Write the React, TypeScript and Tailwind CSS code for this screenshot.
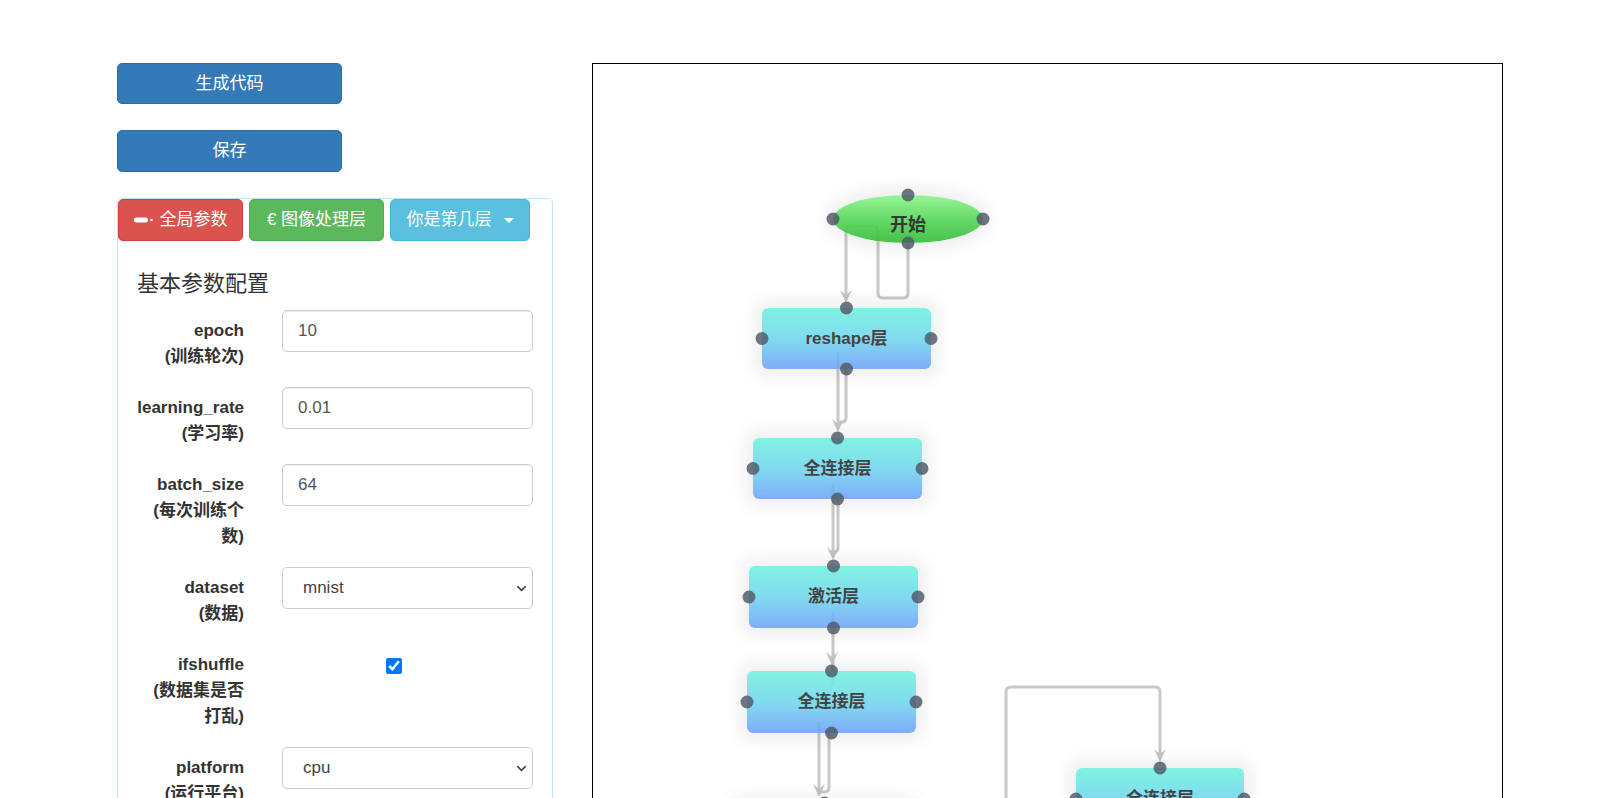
import { ChevronDown } from "lucide-react";

type FlowNode = {
  id: string;
  x: number;
  y: number;
  w: number;
  h: number;
  label: string;
  start?: boolean;
};

// page coordinates; canvas padding box starts at (593, 64)
const OX = 593;
const OY = 64;

const nodes: FlowNode[] = [
  { id: "start", x: 833, y: 195, w: 150, h: 48, label: "开始", start: true },
  { id: "reshape", x: 762, y: 308, w: 169, h: 61, label: "reshape层" },
  { id: "fc1", x: 753, y: 438, w: 169, h: 61, label: "全连接层" },
  { id: "act", x: 749, y: 566, w: 169, h: 62, label: "激活层" },
  { id: "fc2", x: 747, y: 671, w: 169, h: 62, label: "全连接层" },
  { id: "fc3", x: 740, y: 803, w: 169, h: 62, label: "全连接层" },
  { id: "fc4", x: 1076, y: 768, w: 168, h: 62, label: "全连接层" },
];

const links = [
  "M908 244 V293 Q908 298 903 298 H883 Q878 298 878 293 V231 Q878 226 873 226 H851 Q846 226 846 231 V297",
  "M846 369 V418 Q846 422 842 422 H838",
  "M838 352 V428",
  "M838 499 V548 Q838 552 834 552 H833",
  "M833 484 V556",
  "M833 612 V686",
  "M829 733 V787 Q829 792 824 792 H820",
  "M819 722 V794",
  "M1006 800 V692 Q1006 687 1011 687 H1155 Q1160 687 1160 692 V758",
];

const arrows: [number, number][] = [
  [846, 303],
  [838, 432],
  [833, 560],
  [832, 665],
  [819, 797],
  [1160, 762],
];

const arrowPoints = (x: number, y: number) =>
  `${x},${y} ${x - 6},${y - 13} ${x},${y - 8} ${x + 6},${y - 13}`;

const fields = [
  { name: "epoch", desc: "(训练轮次)", kind: "input", value: "10" },
  { name: "learning_rate", desc: "(学习率)", kind: "input", value: "0.01" },
  { name: "batch_size", desc: "(每次训练个数)", kind: "input", value: "64" },
  { name: "dataset", desc: "(数据)", kind: "select", value: "mnist" },
  { name: "ifshuffle", desc: "(数据集是否打乱)", kind: "check", value: "" },
  { name: "platform", desc: "(运行平台)", kind: "select", value: "cpu" },
];

function Canvas() {
  return (
    <div className="relative ml-[39px] h-[760px] w-[911px] shrink-0 border border-black">
      <svg
        className="absolute left-0 top-0"
        width={909}
        height={760}
        viewBox={`${OX} ${OY} 909 760`}
      >
        {links.map((d, i) => (
          <path
            key={i}
            d={d}
            fill="none"
            stroke="#c9c9c9"
            strokeWidth={3}
            strokeLinejoin="round"
          />
        ))}
        {arrows.map(([x, y], i) => (
          <polygon key={i} points={arrowPoints(x, y)} fill="#c4c4c4" />
        ))}
      </svg>

      {nodes.map((n) => (
        <div
          key={n.id}
          className={
            n.start
              ? "absolute flex items-center justify-center rounded-[50%] bg-linear-to-b from-[#8af58b] via-[#57d65a] to-[#30bb35] pt-[12px] text-[18px] font-bold text-[#222] opacity-[0.9] shadow-[0_0_16px_8px_rgba(0,0,0,0.07)]"
              : "absolute flex items-center justify-center rounded-[6px] bg-linear-to-b from-[#70f1de] via-[#70d6ee] to-[#6fa1f7] text-[17px] font-bold text-[#2a2a2a] opacity-[0.88] shadow-[0_0_16px_8px_rgba(0,0,0,0.07)]"
          }
          style={{ left: n.x - OX, top: n.y - OY, width: n.w, height: n.h }}
        >
          {n.label}
        </div>
      ))}

      {/* endpoints sit above the nodes */}
      <svg
        className="pointer-events-none absolute left-0 top-0"
        width={909}
        height={760}
        viewBox={`${OX} ${OY} 909 760`}
      >
        {nodes.map((n) => (
          <g key={n.id} fill="#4f5968" opacity={0.82}>
            <circle cx={n.x + n.w / 2} cy={n.y} r={6.5} />
            <circle cx={n.x + n.w / 2} cy={n.y + n.h} r={6.5} />
            <circle cx={n.x} cy={n.y + n.h / 2} r={6.5} />
            <circle cx={n.x + n.w} cy={n.y + n.h / 2} r={6.5} />
          </g>
        ))}
      </svg>
    </div>
  );
}

export default function App() {
  return (
    <div className="h-[798px] overflow-hidden bg-white font-['Liberation_Sans','Noto_Sans_CJK_SC',sans-serif] text-[#333]">
      <div className="flex pl-[117px] pt-[63px]">
        <div className="w-[436px] shrink-0">
          <button className="block h-[41px] w-[225px] rounded-[5px] border border-[#2e6da4] bg-[#337ab7] text-[17px] text-white">
            生成代码
          </button>
          <button className="mt-[26px] block h-[42px] w-[225px] rounded-[5px] border border-[#2e6da4] bg-[#337ab7] text-[17px] text-white">
            保存
          </button>

          <div className="mt-[26px] h-[700px] rounded-[5px] border border-[#bce8f1]">
            <div className="flex gap-[6px]">
              <button className="flex h-[42px] w-[125px] items-center justify-center gap-[6px] rounded-[5px] border border-[#d43f3a] bg-[#d9534f] text-[17px] text-white">
                <svg width="20" height="6" viewBox="0 0 20 6">
                  <rect x="0" y="0.5" width="14" height="5" rx="2.5" fill="#fff" />
                  <circle cx="17.5" cy="3" r="1.3" fill="#fff" />
                </svg>
                全局参数
              </button>
              <button className="flex h-[42px] w-[135px] items-center justify-center rounded-[5px] border border-[#4cae4c] bg-[#5cb85c] text-[17px] text-white">
                € 图像处理层
              </button>
              <button className="flex h-[42px] w-[140px] items-center justify-center rounded-[5px] border border-[#46b8da] bg-[#5bc0de] text-[17px] text-white">
                你是第几层
                <span className="ml-[12px] h-0 w-0 border-x-[5px] border-t-[5px] border-x-transparent border-t-white" />
              </button>
            </div>

            <div className="px-[19px]">
              <h4 className="mt-[31px] mb-[14px] text-[22px] leading-[24px] font-normal text-[#333]">
                基本参数配置
              </h4>

              {fields.map((f) => (
                <div key={f.name} className="mb-[17px] flex">
                  <div className="w-[107px] shrink-0 pt-[8px] text-right text-[17px] leading-[26px] font-bold">
                    <div>{f.name}</div>
                    <div>{f.desc}</div>
                  </div>
                  <div className="ml-[38px] w-[251px] shrink-0">
                    {f.kind === "input" && (
                      <input
                        defaultValue={f.value}
                        className="h-[42px] w-full rounded-[5px] border border-[#ccc] px-[15px] text-[17px] text-[#555] shadow-[inset_0_1px_1px_rgba(0,0,0,0.075)] outline-none"
                      />
                    )}
                    {f.kind === "select" && (
                      <div className="relative">
                        <select
                          defaultValue={f.value}
                          className="h-[42px] w-full appearance-none rounded-[5px] border border-[#ccc] bg-white pl-[20px] text-[17px] text-[#444] outline-none"
                        >
                          <option value={f.value}>{f.value}</option>
                        </select>
                        <ChevronDown
                          size={15}
                          strokeWidth={2.5}
                          className="pointer-events-none absolute right-[4px] top-[14px] text-[#444]"
                        />
                      </div>
                    )}
                    {f.kind === "check" && (
                      <input
                        type="checkbox"
                        defaultChecked
                        className="m-0 mt-[14px] ml-[104px] h-4 w-4 accent-[#0075ff]"
                      />
                    )}
                  </div>
                </div>
              ))}
            </div>
          </div>
        </div>

        <Canvas />
      </div>
    </div>
  );
}
